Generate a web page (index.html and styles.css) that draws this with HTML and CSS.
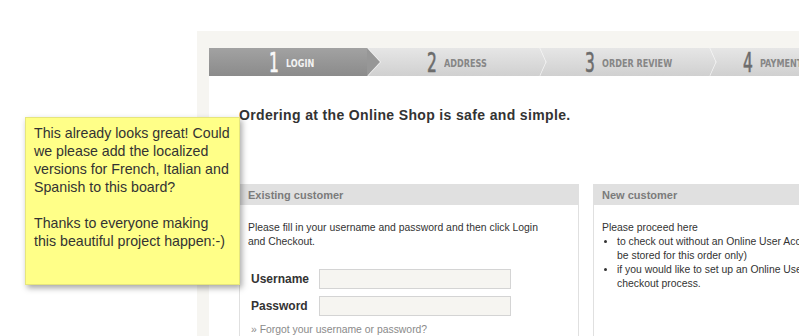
FILE: index.html
```html
<!DOCTYPE html>
<html lang="en">
<head>
    <meta charset="UTF-8">
    <title>Checkout - Login</title>
    <link rel="stylesheet" href="styles.css">
</head>
<body>
    <div class="shop">
        <div class="steps">
            <div class="step active"><span class="num">1</span><span class="label">LOGIN</span></div>
            <div class="step s2"><span class="num">2</span><span class="label">ADDRESS</span></div>
            <div class="step s3"><span class="num">3</span><span class="label">ORDER REVIEW</span></div>
            <div class="step s4"><span class="num">4</span><span class="label">PAYMENT</span></div>
        </div>
        <div class="content">
            <h1>Ordering at the Online Shop is safe and simple.</h1>
            <div class="boxes">
                <div class="box existing">
                    <div class="box-head">Existing customer</div>
                    <div class="box-body">
                        <p>Please fill in your username and password and then click Login and Checkout.</p>
                        <div class="field">
                            <label for="user">Username</label>
                            <input type="text" id="user">
                        </div>
                        <div class="field">
                            <label for="pass">Password</label>
                            <input type="password" id="pass">
                        </div>
                        <a class="forgot" href="#">» Forgot your username or password?</a>
                    </div>
                </div>
                <div class="box newcust">
                    <div class="box-head">New customer</div>
                    <div class="box-body">
                        <p class="intro">Please proceed here</p>
                        <ul>
                            <li>to check out without an Online User Account (your data will be stored for this order only)</li>
                            <li>if you would like to set up an Online User Account during the checkout process.</li>
                        </ul>
                    </div>
                </div>
            </div>
        </div>
    </div>

    <div class="note">
        <p>This already looks great! Could we please add the localized versions for French, Italian and Spanish to this board?</p>
        <p>Thanks to everyone making this beautiful project happen:-)</p>
    </div>
</body>
</html>
```

FILE: styles.css
```css
html, body {
    height: 336px;
    overflow: hidden;
}
body {
    margin: 0;
    background: #fff;
    font-family: "Liberation Sans", Arial, sans-serif;
}
.shop {
    margin: 31px 0 0 197px;
    padding: 17px 0 0 12px;
    background: #f6f5f1;
    height: 288px;
    overflow: hidden;
}
.steps {
    display: flex;
    height: 28px;
    background: linear-gradient(#e6e6e6, #d0d0d0);
    width: 640px;
}
.step {
    position: relative;
    width: 158px;
    flex: none;
    box-sizing: border-box;
    padding-left: 60px;
    display: flex;
    align-items: center;
    color: #777;
    white-space: nowrap;
}
/* thin white chevron between the light steps */
.step::after {
    content: "";
    position: absolute;
    top: 4px;
    right: -25px;
    width: 19px;
    height: 19px;
    border-top: 1px solid #fafafa;
    border-right: 1px solid #fafafa;
    transform: scaleX(0.45) rotate(45deg);
    z-index: 1;
}
.s3::after {
    right: -37px;
}
.step.active {
    background: linear-gradient(#a2a2a2, #8b8b8b);
    color: #fafafa;
}
.step.active::after {
    top: 0;
    right: -13px;
    width: 0;
    height: 0;
    border-top: 14px solid transparent;
    border-bottom: 14px solid transparent;
    border-right: 0;
    border-left: 13px solid #979797;
    transform: none;
}
.step.active::before {
    content: "";
    position: absolute;
    top: 0;
    right: -14px;
    border-top: 14px solid transparent;
    border-bottom: 14px solid transparent;
    border-left: 13px solid #f4f4f4;
    z-index: 1;
}
.num {
    display: inline-block;
    width: 17px;
    flex: none;
    font-family: "DejaVu Sans Condensed", sans-serif;
    font-size: 26px;
    line-height: 1;
    margin-top: 2px;
    transform: scaleX(0.66);
    transform-origin: left center;
    color: #6c6c6c;
    -webkit-text-stroke: 0.6px currentColor;
}
.step.active .num {
    color: #fafafa;
}
.label {
    display: inline-block;
    font-family: "DejaVu Sans Condensed", sans-serif;
    font-weight: bold;
    font-size: 11px;
    color: #868686;
    margin-top: 3px;
    transform: scaleX(0.82);
    transform-origin: left center;
}
.active .label {
    color: #f2f2f2;
}
.content {
    background: #fff;
    padding: 31px 0 0 30px;
    height: 300px;
}
h1 {
    margin: 0 0 61px;
    font-size: 14px;
    letter-spacing: 0.35px;
    color: #333;
    font-weight: bold;
}
.boxes {
    display: flex;
    gap: 14px;
}
.box {
    border: 1px solid #e0e0e0;
    flex: none;
}
.existing {
    width: 338px;
}
.newcust {
    width: 310px;
}
.box-head {
    background: #e0e0e0;
    color: #7b7b7b;
    font-size: 11px;
    font-weight: bold;
    height: 20px;
    line-height: 20px;
    padding: 0 8px;
}
.box-body {
    padding: 16px 8px 0;
    font-size: 10.4px;
    color: #333;
    line-height: 14px;
}
.existing .box-body {
    padding-right: 35px;
}
.box-body p {
    margin: 0 0 20px;
}
.field {
    display: flex;
    align-items: center;
    margin-bottom: 7px;
}
.field label {
    width: 68px;
    flex: none;
    padding-left: 3px;
    font-size: 12px;
    font-weight: bold;
    color: #333;
}
.field input {
    width: 190px;
    flex: none;
    height: 18px;
    padding: 0;
    margin: 0;
    border: 1px solid #d4d4d4;
    background: #f6f5f1;
}
.forgot {
    display: block;
    margin-top: 2px;
    padding-left: 3px;
    color: #8a8a8a;
    text-decoration: none;
    white-space: nowrap;
}
.box-body p.intro {
    margin: 0;
}
ul {
    margin: 0;
    padding-left: 15px;
}
.note {
    position: absolute;
    left: 25px;
    top: 117px;
    width: 197px;
    height: 150px;
    padding: 6px 8px 10px;
    background: #ffff88;
    border: 1px solid #e6e67c;
    box-shadow: 2px 3px 6px rgba(0,0,0,0.35);
    color: #333;
    font-size: 14.2px;
    line-height: 18px;
}
.note p {
    margin: 0 0 18px;
}
```
